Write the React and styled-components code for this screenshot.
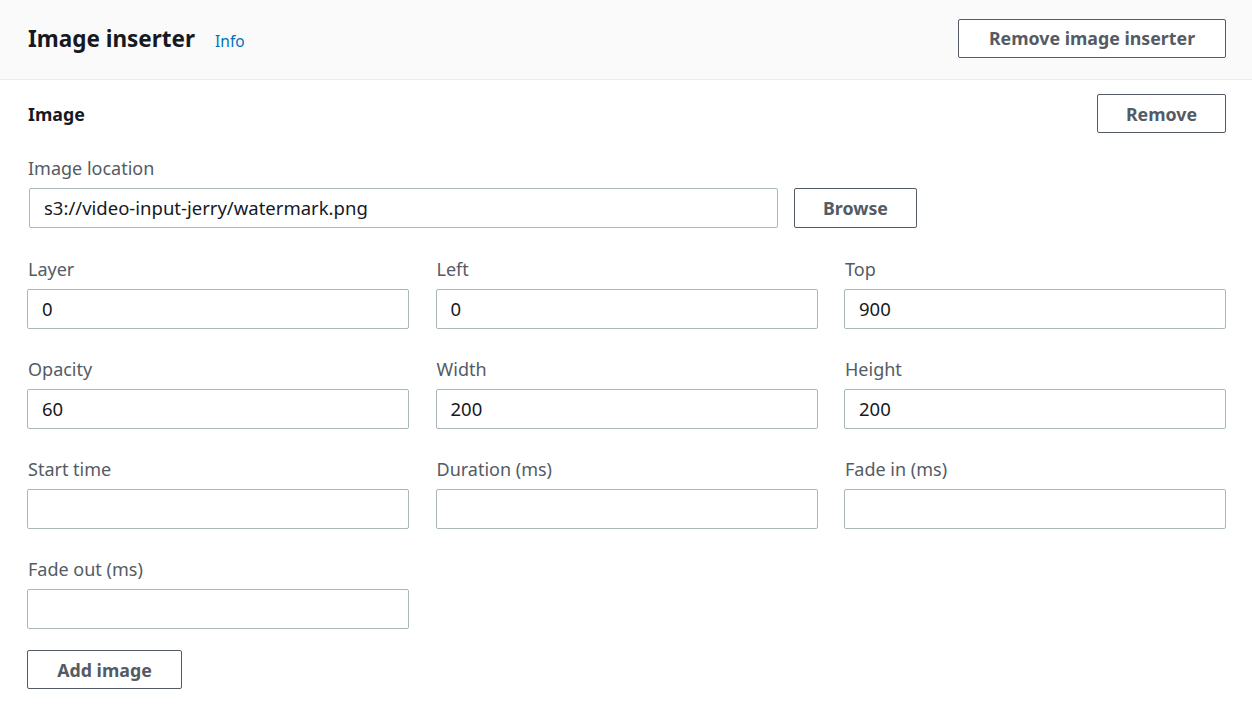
import React from 'react'
import styled, { createGlobalStyle } from 'styled-components'

const GlobalStyle = createGlobalStyle`
    body {
        margin: 0;
        background: #fff;
        font-family: "Noto Sans", "Open Sans", sans-serif;
        color: #16191f;
    }
`
const Panel = styled.div`
    width: 1252px;
`
const Header = styled.div`
    height: 80px;
    box-sizing: border-box;
    background: #fafafa;
    border-bottom: 1px solid #eaeded;
    display: flex;
    align-items: center;
    justify-content: space-between;
    padding: 0 26px 3px 28px;
`
const TitleGroup = styled.div`
    display: flex;
    align-items: baseline;
    gap: 20px;
`
const Title = styled.h2`
    margin: 0;
    font-size: 22.5px;
    font-weight: 700;
    color: #16191f;
`
const InfoLink = styled.a`
    font-size: 15.5px;
    color: #0073bb;
    text-decoration: none;
`
const Button = styled.button`
    height: ${p => p.$height || 39}px;
    box-sizing: border-box;
    padding: 0 ${p => p.$pad || 20}px;
    min-width: ${p => p.$minWidth || 0}px;
    background: #fff;
    border: 1px solid #545b64;
    border-radius: 2px;
    font-family: inherit;
    font-size: 17.8px;
    font-weight: 700;
    color: #545b64;
    cursor: pointer;
`
const Body = styled.div`
    padding: 14px 26px 0 27px;
`
const SectionHead = styled.div`
    display: flex;
    align-items: center;
    justify-content: space-between;
    margin-bottom: 25px;
`
const SectionTitle = styled.div`
    font-size: 17.8px;
    font-weight: 700;
    padding-left: 1px;
`
const Label = styled.div`
    font-size: 18px;
    line-height: 20px;
    color: #545b64;
    margin-bottom: 10px;
    padding-left: 1px;
`
const LocationRow = styled.div`
    display: flex;
    gap: 16px;
    padding-left: 2px;
    margin-bottom: 31px;
`
const Input = styled.input`
    box-sizing: border-box;
    width: ${p => p.$width ? p.$width + 'px' : '100%'};
    height: 40px;
    border: 1px solid #aab7b8;
    border-radius: 2px;
    padding: 0 14px 1px;
    font-family: inherit;
    font-size: 18.5px;
    color: #16191f;
    outline: none;
`
const Grid = styled.div`
    display: grid;
    grid-template-columns: repeat(3, 382px);
    column-gap: 26.5px;
    row-gap: 30px;
`
const Field = styled.div``

const Footer = styled.div`
    margin-top: 21px;
`

const fields = [
    ['Layer', '0'],
    ['Left', '0'],
    ['Top', '900'],
    ['Opacity', '60'],
    ['Width', '200'],
    ['Height', '200'],
    ['Start time', ''],
    ['Duration (ms)', ''],
    ['Fade in (ms)', ''],
    ['Fade out (ms)', ''],
]

const App = () => {
  return (
    <Panel>
        <GlobalStyle/>
        <Header>
            <TitleGroup>
                <Title>Image inserter</Title>
                <InfoLink href="#">Info</InfoLink>
            </TitleGroup>
            <Button $minWidth={268}>Remove image inserter</Button>
        </Header>
        <Body>
            <SectionHead>
                <SectionTitle>Image</SectionTitle>
                <Button $minWidth={129}>Remove</Button>
            </SectionHead>
            <Label>Image location</Label>
            <LocationRow>
                <Input $width={749} defaultValue="s3://video-input-jerry/watermark.png"/>
                <Button $minWidth={123} $height={40}>Browse</Button>
            </LocationRow>
            <Grid>
                {fields.map(([label, value]) => (
                    <Field key={label}>
                        <Label>{label}</Label>
                        <Input defaultValue={value}/>
                    </Field>
                ))}
            </Grid>
            <Footer>
                <Button $minWidth={155}>Add image</Button>
            </Footer>
        </Body>
    </Panel>
  )
}

export default App
